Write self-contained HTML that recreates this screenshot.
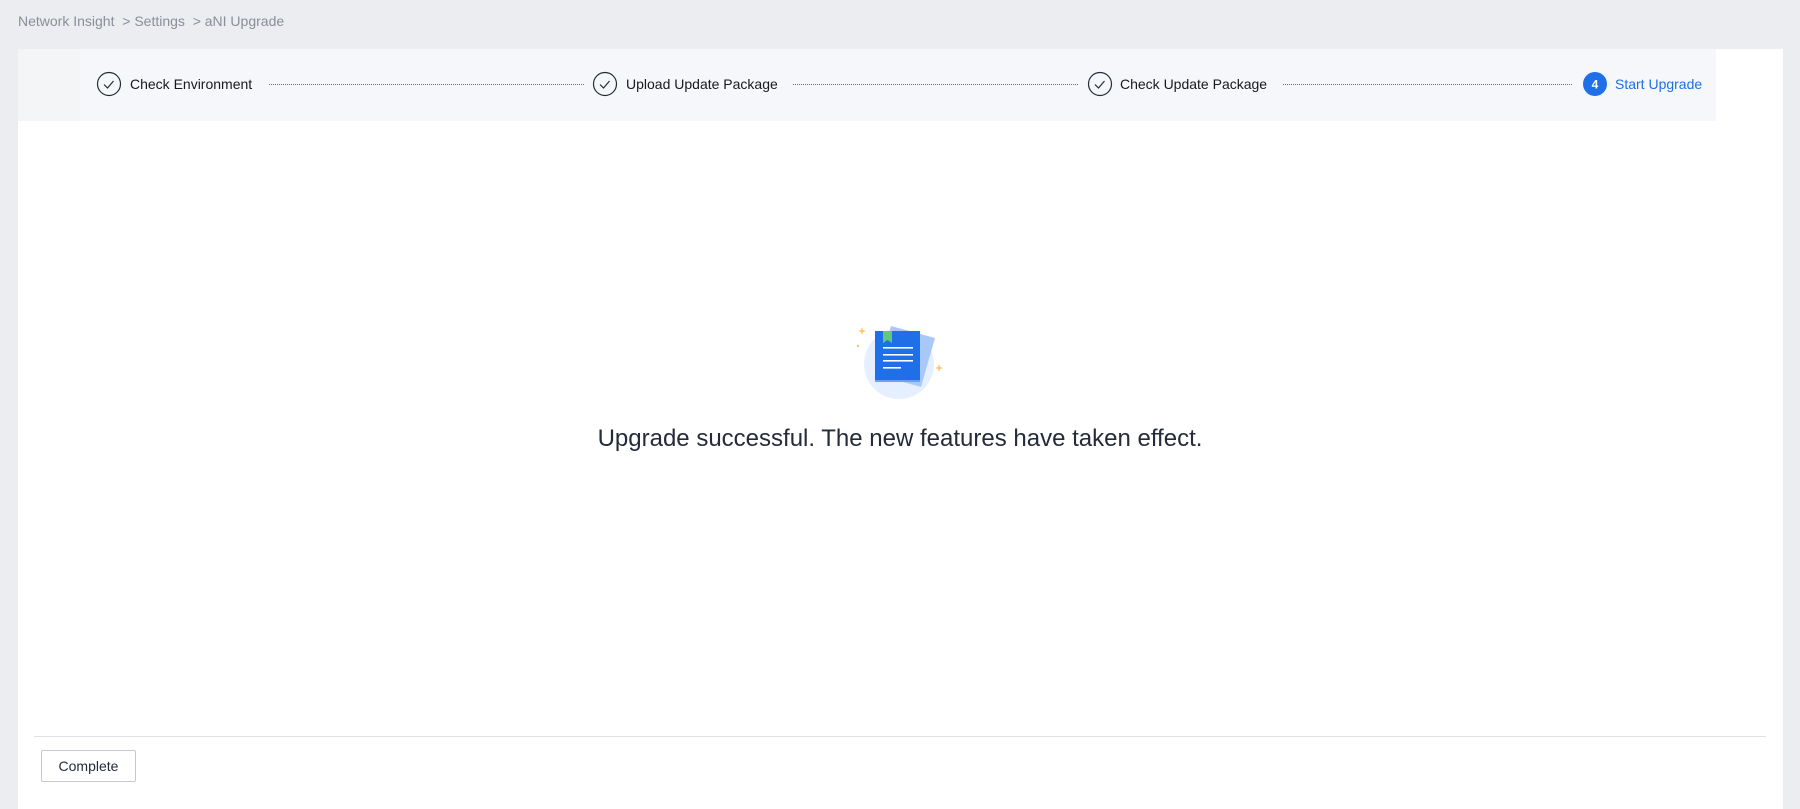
<!DOCTYPE html>
<html><head><meta charset="utf-8"><style>
*{margin:0;padding:0;box-sizing:border-box}
body{width:1800px;height:803px;background:#ebedf0;font-family:"Liberation Sans",sans-serif;position:relative;overflow:hidden}
.bc{position:absolute;left:18px;top:13px;font-size:14px;color:#8a8e99}
.card{position:absolute;left:18px;top:49px;width:1765px;height:760px;background:#fff}
.hdr{position:absolute;left:0;top:0;width:1698px;height:72px;background:#f5f7fa}
.hdr0{position:absolute;left:0;top:0;width:62px;height:72px;background:#f4f5f6}
.t{position:absolute;top:76px;font-size:14px;color:#191919}
.msg{position:absolute;left:0;width:1800px;top:425px;text-align:center;font-size:24px;color:#252b3a}
.div{position:absolute;left:34px;top:736px;width:1732px;border-top:1px solid #dfe1e6}
.btn{position:absolute;left:41px;top:750px;width:95px;height:32px;border:1px solid #c6c9d0;border-radius:2px;font-size:14px;color:#252b3a;text-align:center;line-height:30px;background:#fff}
</style></head><body>
<div class="bc">Network Insight &nbsp;&gt; Settings &nbsp;&gt; aNI Upgrade</div>
<div class="card"><div class="hdr"></div><div class="hdr0"></div></div>
<svg style="position:absolute;left:0;top:0" width="1800" height="803">
<g fill="none" stroke="#252b3a" stroke-width="1.2">
<circle cx="109" cy="84" r="11.5"/><path d="M104 84.5l3.5 3.5 6-7"/>
<circle cx="605" cy="84" r="11.5"/><path d="M600 84.5l3.5 3.5 6-7"/>
<circle cx="1100" cy="84" r="11.5"/><path d="M1095 84.5l3.5 3.5 6-7"/>
</g>
<g stroke="#526ecc" stroke-width="1" stroke-dasharray="1 1">
<line x1="269" y1="84.5" x2="584" y2="84.5"/>
<line x1="793" y1="84.5" x2="1079" y2="84.5"/>
<line x1="1283" y1="84.5" x2="1573" y2="84.5"/>
</g>
<circle cx="1595" cy="84" r="12" fill="#1e6fe8"/>
<text x="1595" y="88.5" fill="#fff" font-size="12" font-weight="bold" text-anchor="middle" font-family="Liberation Sans">4</text>
<g transform="translate(820,300)">
<circle cx="79" cy="64" r="35" fill="#e5efff"/>
<polygon points="71,26 115,38 101,87 58,75" fill="#a9c8fa"/>
<rect x="55" y="31" width="45" height="51" fill="#1e6fe8"/>
<rect x="55" y="80" width="45" height="2" fill="#6aa0f5"/>
<polygon points="63,31 72,31 72,43 67.5,40 63,43" fill="#62c97b"/>
<g fill="#fff"><rect x="63" y="47" width="30" height="1.6"/><rect x="63" y="54" width="30" height="1.6"/><rect x="63" y="60" width="30" height="1.6"/><rect x="63" y="67" width="18" height="1.6"/></g>
<g fill="#fbc66a"><path d="M42 27l1 3 3 1-3 1-1 3-1-3-3-1 3-1z"/><circle cx="38" cy="46" r="1.2"/><path d="M119 64l1 3 3 1-3 1-1 3-1-3-3-1 3-1z"/></g>
</g>
</svg>
<div class="t" style="left:130px">Check Environment</div>
<div class="t" style="left:626px">Upload Update Package</div>
<div class="t" style="left:1120px">Check Update Package</div>
<div class="t" style="left:1615px;color:#1e6fe8">Start Upgrade</div>
<div class="msg">Upgrade successful. The new features have taken effect.</div>
<div class="div"></div>
<div class="btn">Complete</div>
</body></html>
